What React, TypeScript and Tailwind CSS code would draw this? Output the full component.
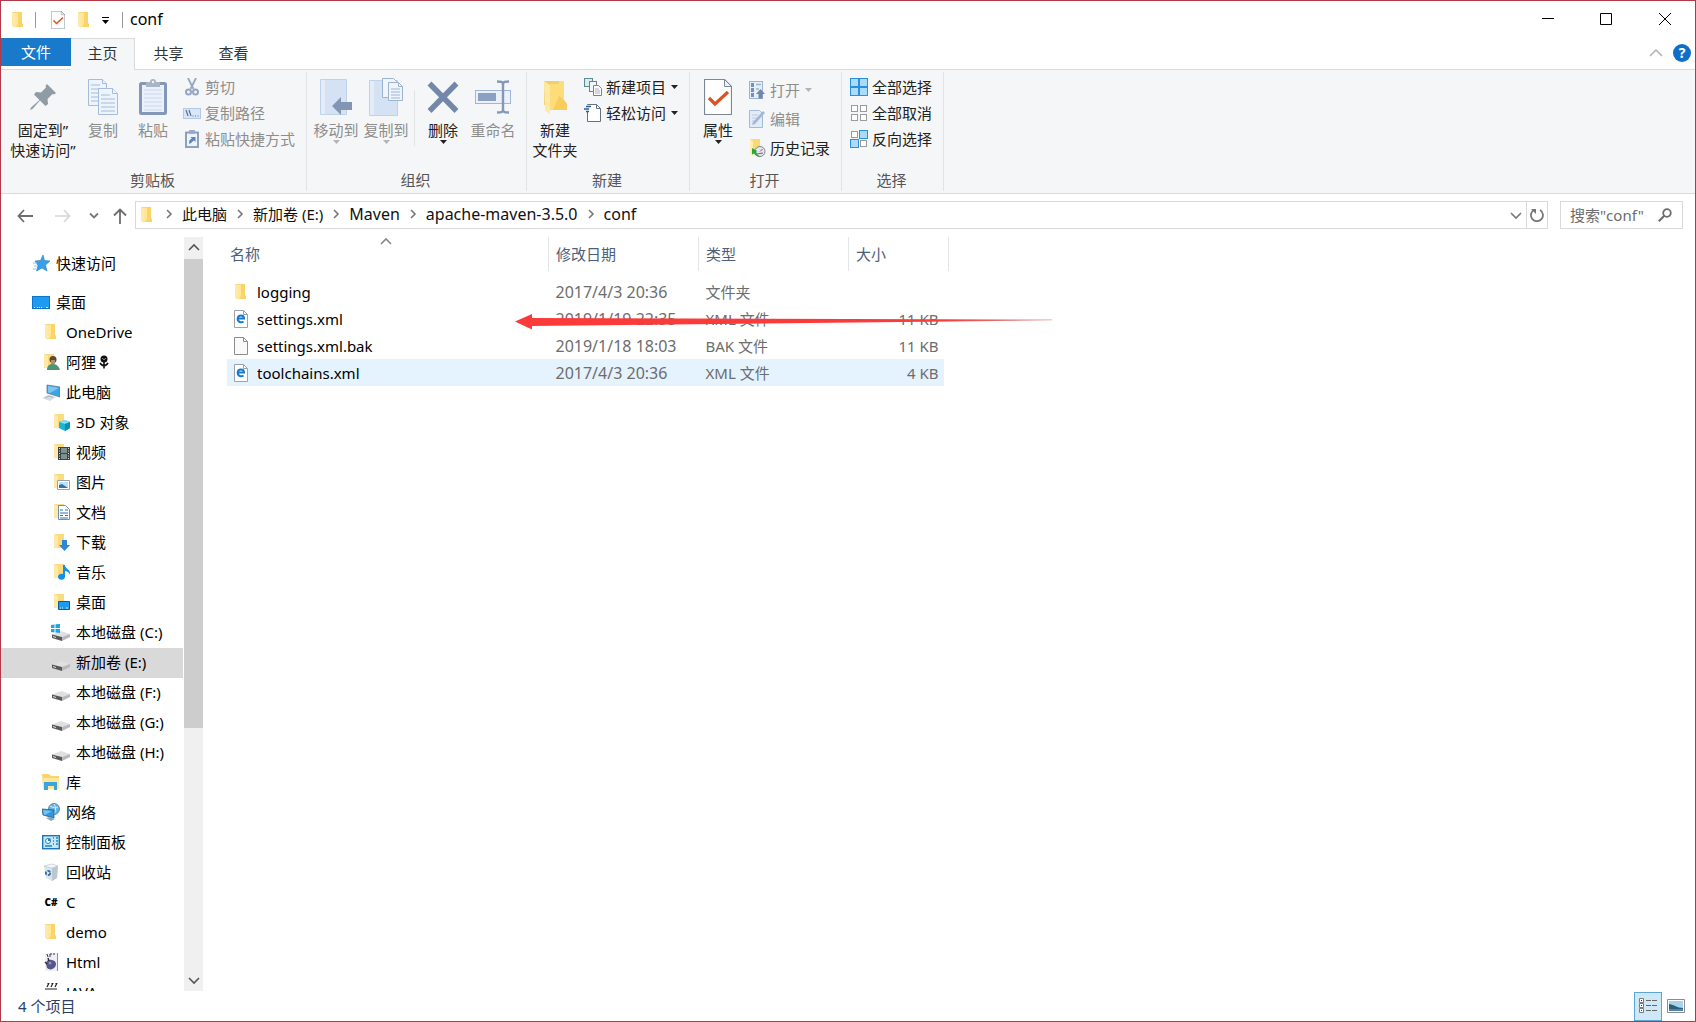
import { ReactNode } from 'react';

interface IconProps {
  className?: string;
}

function Folder({ className = 'h-[18px] w-[18px]' }: IconProps) {
  return (
    <svg viewBox="0 0 18 18" className={className} aria-hidden="true">
      <path d="M3 1h9v14H3z" fill="#f3d681" />
      <path d="M4 2h8l1 12 1 2H5z" fill="#ffe69b" />
      <path d="M9 1h4v11l1 1v3H7l2-3z" fill="#fbd467" />
      <path d="M3 1l3 2v14l-3-2z" fill="#ffe9a9" />
    </svg>
  );
}

// folder with a small picture in its lower right corner
function BadgeFolder({ children }: { children: ReactNode }) {
  return (
    <svg viewBox="0 0 18 18" className="h-[18px] w-[18px]" aria-hidden="true">
      <path d="M2 1h10v14H2z" fill="#f6da87" />
      <path d="M6 2h6v13H6z" fill="#fbdb7c" />
      <path d="M2 1l4 2v13l-4-2z" fill="#ffe9a9" />
      {children}
    </svg>
  );
}

function BigFolder() {
  return (
    <svg viewBox="0 0 28 36" className="h-9 w-7" aria-hidden="true">
      <path d="M3 2h18v24H3z" fill="#f2cf6b" />
      <path d="M9 5h9v-3h5v19l3 4v6H8z" fill="#fddc7a" />
      <path d="M18 17l5 4 3 4v6H12z" fill="#f9cd5c" />
      <path d="M3 2l6 4v28l-1 1-4-4z" fill="#ffe9a6" />
    </svg>
  );
}

function CheckPage({ className }: IconProps) {
  return (
    <svg viewBox="0 0 28 36" className={className} aria-hidden="true">
      <path d="M.5.5h20l7 7v28H.5z" fill="#fff" stroke="#7d8896" strokeWidth="1.200" />
      <path d="M20.500.5v7h7z" fill="#eef1f5" stroke="#7d8896" />
      <path d="M5 19l6 6L24 13" fill="none" stroke="#db5323" strokeWidth="3.200" />
    </svg>
  );
}

function Caret({ className = 'text-[#222]' }: IconProps) {
  return (
    <svg viewBox="0 0 7 4" className={`h-1 w-[7px] ${className}`} aria-hidden="true">
      <path d="M0 0h7L3.500 4z" fill="currentColor" />
    </svg>
  );
}

function Chevron({ dir, className = '' }: { dir: 'up' | 'down' | 'right'; className?: string }) {
  const paths = {
    up: 'M1 8l5-5 5 5',
    down: 'M1 4l5 5 5-5',
    right: 'M4 2l4 4-4 4',
  };
  return (
    <svg viewBox="0 0 12 12" className={`h-3 w-3 shrink-0 ${className}`} aria-hidden="true">
      <path d={paths[dir]} fill="none" stroke="currentColor" strokeWidth="1.600" />
    </svg>
  );
}

function Pin() {
  return (
    <svg viewBox="0 0 26 26" className="h-[26px] w-[26px]" aria-hidden="true">
      <path d="M17 0l9 9-2 1.500-1.500-.5-5 5 .5 5-2.500 2-5.500-5.500L2.500 25 0 26l1-2.500L9.500 16 4 10.500 6 8l5 .5 5-5-.5-1.500z" fill="#8f9ba5" />
    </svg>
  );
}

function CopyPages() {
  return (
    <svg viewBox="0 0 30 36" className="h-9 w-[30px]" fill="#eef4fc" stroke="#a5bcdc" aria-hidden="true">
      <path d="M.5.5h14l4 4v22H.5z" />
      <path d="M14.500.5v4h4M3 6h9M3 10h12M3 14h12M3 18h12M3 22h12" />
      <path d="M10.500 9.500h14l5 5v21h-19z" />
      <path d="M24.500 9.500v5h5M13 16h9M13 20h14M13 24h14M13 28h14M13 32h14" />
    </svg>
  );
}

function Clipboard() {
  return (
    <svg viewBox="0 0 28 36" className="h-9 w-7" aria-hidden="true">
      <rect x="1.500" y="4.500" width="25" height="30" rx="1" fill="#eaf1fb" stroke="#8398b8" strokeWidth="3" />
      <path d="M5 11h18M5 15h18M5 19h18M5 23h18M5 27h18M5 31h18" stroke="#c9d8ee" />
      <path d="M7 3h4a3 3 0 0 1 6 0h4v5H7z" fill="#a9b4c4" />
      <circle cx="14" cy="3" r="1.200" fill="#f5f6f7" />
    </svg>
  );
}

function Scissors() {
  return (
    <svg viewBox="0 0 18 18" className="h-[18px] w-[18px]" fill="none" stroke="#93a7c2" aria-hidden="true">
      <path d="M5 0l5.500 11M13 0L7.500 11" strokeWidth="1.800" />
      <circle cx="5.500" cy="14" r="2.500" strokeWidth="2" />
      <circle cx="12.500" cy="14" r="2.500" strokeWidth="2" />
    </svg>
  );
}

function PathIcon() {
  return (
    <svg viewBox="0 0 18 18" className="h-[18px] w-[18px]" aria-hidden="true">
      <rect x=".5" y="4.500" width="17" height="10" fill="#d9e6f7" stroke="#b3c9e6" />
      <path d="M3 6l2 6M6 6l2 6" stroke="#5b7397" strokeWidth="1.200" />
      <path d="M9.500 12h1M12 12h1M14.500 12h1" stroke="#5b7397" strokeWidth="1.200" />
    </svg>
  );
}

function ShortcutIcon() {
  return (
    <svg viewBox="0 0 18 18" className="h-[18px] w-[18px]" aria-hidden="true">
      <rect x="3" y="2.500" width="12" height="14.500" fill="#edf3fc" stroke="#8398b8" strokeWidth="1.800" />
      <path d="M6 0h6v4H6z" fill="#9fabbd" />
      <path d="M6.500 14c-1-3 .5-5 2.500-5.500L7.500 7h5v5L11 10.500c-1.500.5-2 2-4.500 3.500z" fill="#5f83bb" />
    </svg>
  );
}

function MoveTo() {
  return (
    <svg viewBox="0 0 34 36" className="h-9 w-[34px]" aria-hidden="true">
      <path d="M1.500.5h26v35h-26z" fill="#d5e2f4" stroke="#c0d1ea" />
      <path d="M2 1h4v34H2z" fill="#e3ecf8" />
      <path d="M13 27l9-9v5h11v8H22v5z" fill="#8296b4" />
    </svg>
  );
}

function CopyTo() {
  return (
    <svg viewBox="0 0 34 38" className="h-[38px] w-[34px]" aria-hidden="true">
      <path d="M.5 2.500h28v35H.5z" fill="#d5e2f4" stroke="#c0d1ea" />
      <path d="M1 3h4v34H1z" fill="#e3ecf8" />
      <g fill="#f0f5fc" stroke="#9db3d2">
        <path d="M13.500.5h11l3 3v16h-14z" />
        <path d="M19.500 4.500h10l4 4v14h-14zM29.500 4.500v4h4M22 11h9M22 14h9M22 17h9M22 20h9" />
      </g>
    </svg>
  );
}

function DeleteX() {
  return (
    <svg viewBox="0 0 32 32" className="h-8 w-8" aria-hidden="true">
      <path d="M2.500 2.500L29.500 30M29.500 2.500L2.500 30" stroke="#7388a8" strokeWidth="5.500" />
    </svg>
  );
}

function Rename() {
  return (
    <svg viewBox="0 0 36 34" className="h-[34px] w-9" aria-hidden="true">
      <rect x=".5" y="10.500" width="35" height="13" fill="#eaf1fa" stroke="#9fb6d6" />
      <rect x="3" y="13" width="18" height="8" fill="#8ba1c1" />
      <path d="M22 1.500c4 0 6 0 6 3v25c0 3-2 3-6 3M34 1.500c-4 0-6 0-6 3v25c0 3 2 3 6 3" fill="none" stroke="#8398b8" strokeWidth="2.400" />
    </svg>
  );
}

function NewItem() {
  return (
    <svg viewBox="0 0 18 18" className="h-[18px] w-[18px]" aria-hidden="true">
      <rect x=".5" y=".5" width="8" height="8" fill="#dcebec" stroke="#5b8b92" />
      <rect x="5.500" y="3.500" width="7" height="10" fill="#f4f7fa" stroke="#6f8294" />
      <path d="M9.500 7.500h5l3 3v7h-8z" fill="#fff" stroke="#73849a" />
      <path d="M11 11h4M11 13h5M11 15h5" stroke="#9fb0c6" />
    </svg>
  );
}

function EasyAccess() {
  return (
    <svg viewBox="0 0 18 18" className="h-[18px] w-[18px]" aria-hidden="true">
      <path d="M3.500.5h9l4 4v13h-13z" fill="#fff" stroke="#66717e" />
      <path d="M12.500.5v4h4" fill="none" stroke="#66717e" />
      <path d="M2 1h4v7H2z" fill="#f5f6f7" />
      <path d="M2 2.500h5M0 5h5M2 7.500h3" stroke="#2c5d96" strokeWidth="1.400" />
    </svg>
  );
}

function OpenIcon() {
  return (
    <svg viewBox="0 0 18 18" className="h-[18px] w-[18px]" aria-hidden="true">
      <rect x="1.500" y=".5" width="13" height="17" fill="#e6eefa" stroke="#9fb3d0" />
      <path d="M3 2h3v4H3zM3 7h3v4H3zM3 12h3v4H3z" fill="#7690b6" />
      <path d="M8 3.500h5M8 8h3" stroke="#9fb3d0" strokeWidth="1.500" />
      <path d="M12.500 8l4.500 5h-2.500v4.500h-4V13H8z" fill="#7188ad" />
    </svg>
  );
}

function EditIcon() {
  return (
    <svg viewBox="0 0 18 18" className="h-[18px] w-[18px]" aria-hidden="true">
      <path d="M1.500.5h10l3 3v14h-13z" fill="#e2ebf8" stroke="#a7bad5" />
      <path d="M4 5h6M4 8h6M4 11h5" stroke="#bccde5" />
      <path d="M4 15l1-3L15 1l2 2L7 14z" fill="#a4b7d4" />
    </svg>
  );
}

function HistoryIcon() {
  return (
    <svg viewBox="0 0 18 18" className="h-[18px] w-[18px]" aria-hidden="true">
      <path d="M2 0h10v14H2z" fill="#f9d976" />
      <path d="M2 0l3 2v15l-3-2z" fill="#ffedb3" />
      <circle cx="12" cy="12.500" r="5" fill="#e9e6f1" stroke="#7d8791" />
      <path d="M12 12.500l2.500-2.500M9 15l6-1" stroke="#a24c78" />
      <path d="M4 9v6.500l2-1c1.500 2.500 4 3.500 6.500 3-3-1-4.500-3-4-5.500l1.500.5z" fill="#27a836" />
    </svg>
  );
}

// four small squares; "on" tells which of them are filled
function Squares({ on }: { on: boolean[] }) {
  const spots = [[0, 0], [9, 0], [0, 9], [9, 9]];
  return (
    <svg viewBox="0 0 18 18" className="h-[18px] w-[18px]" aria-hidden="true">
      {spots.map(([x, y], i) =>
        on[i] ? (
          <rect key={i} x={x + 0.5} y={y + 0.5} width="8" height="8" fill="#a9dbfb" stroke="#2b8fdc" />
        ) : (
          <rect key={i} x={x + 1.5} y={y + 1.5} width="6" height="6" fill="#fff" stroke="#9b9b9b" />
        )
      )}
    </svg>
  );
}

function Drive({ system = false }: { system?: boolean }) {
  return (
    <svg viewBox="0 0 18 18" className="h-[18px] w-[18px] overflow-visible" aria-hidden="true">
      <path d="M0 11.500L9 8l9 3-8 3z" fill="#e0e0e0" />
      <path d="M0 11.500l10 2.500v4L0 15z" fill="#585858" />
      <path d="M10 14l8-3v3l-8 4z" fill="#b9b9b9" />
      <path d="M1 13.500l3 1" stroke="#dcdcdc" />
      {system && (
        <path d="M-1 2l3.500-.6V5H-1zM3.500 1.300L8 1v4H3.500zM-1 6h3.500v3.500L-1 9zM3.500 6H8v4l-4.500-.5z" fill="#1ba5e1" />
      )}
    </svg>
  );
}

function Star() {
  return (
    <svg viewBox="0 0 18 18" className="h-[18px] w-[18px]" aria-hidden="true">
      <path d="M11 1l1.500 5.500 5.500.5-4.500 4 1.500 6-5-3L4.500 17 6 11.500 3 7l5.500-.5z" fill="#3a9fe8" stroke="#1e7fca" strokeWidth=".6" />
      <path d="M1 9h4M2 12h3M1 15h3" stroke="#9cc9ec" />
    </svg>
  );
}

function Desktop() {
  return (
    <svg viewBox="0 0 18 18" className="h-[18px] w-[18px]" aria-hidden="true">
      <rect x=".5" y="3.500" width="17" height="12" fill="#1e9af0" stroke="#0c74c9" />
      <path d="M2 14.500h1M5 14.500h1M7 14.500h1M9 14.500h1M14 14.500h2" stroke="#d5ecfd" />
    </svg>
  );
}

function ThisPc() {
  return (
    <svg viewBox="0 0 18 18" className="h-[18px] w-[18px]" aria-hidden="true">
      <path d="M5 2l13 2v10L5 10z" fill="#3ba3e6" stroke="#5d7b92" strokeWidth=".8" />
      <path d="M6 3l11 2-9 5-2-.5z" fill="#7cc6f3" />
      <path d="M0 15l6-3 8 2-6 4z" fill="#d5dce2" />
      <path d="M3 15l4-2 4 1" stroke="#aab4bd" fill="none" />
    </svg>
  );
}

function Library() {
  return (
    <svg viewBox="0 0 18 18" className="h-[18px] w-[18px]" aria-hidden="true">
      <path d="M0 1h7l2 2h8v12H1z" fill="#f6d470" />
      <path d="M1 5h16v11H1z" fill="#ffe795" />
      <path d="M2 9h13v8h-3v-4H6v4H2z" fill="#3ca4dc" />
    </svg>
  );
}

function Network() {
  return (
    <svg viewBox="0 0 18 18" className="h-[18px] w-[18px]" aria-hidden="true">
      <circle cx="12" cy="6" r="5.500" fill="#6ab4e0" stroke="#3679a8" strokeWidth=".8" />
      <path d="M8 3c3 2 6 2 8 1M12 1c2 3 2 7 0 10" stroke="#d7eefb" fill="none" />
      <path d="M0 6l12 1v8L1 12z" fill="#2f97db" stroke="#28618c" strokeWidth=".8" />
      <path d="M1 7l9 1-7 4-1-.5z" fill="#74c3f2" />
      <path d="M4 15l4-1 5 2-4 2z" fill="#8ea5b6" />
    </svg>
  );
}

function ControlPanel() {
  return (
    <svg viewBox="0 0 18 18" className="h-[18px] w-[18px]" aria-hidden="true">
      <rect x=".7" y="2.700" width="16.600" height="13" fill="#c4e8fb" stroke="#1b77b8" strokeWidth="1.400" />
      <circle cx="6" cy="8" r="2.500" fill="#fff" stroke="#2a80ba" />
      <path d="M6 8V5.500h2.500V8z" fill="#2a80ba" />
      <path d="M11 5h1M14 5h2M11 8h1M14 8h2M11 11h1M14 11h2M3 13h7" stroke="#2a80ba" strokeWidth="1.300" />
    </svg>
  );
}

function RecycleBin() {
  return (
    <svg viewBox="0 0 18 18" className="h-[18px] w-[18px]" aria-hidden="true">
      <path d="M2 3l8-2 6 2-1 12-5 3-6-3z" fill="#dce3e9" />
      <path d="M10 5l6-2-1 12-5 3z" fill="#bcc6cf" />
      <path d="M2 3l8-2 6 2-6 2z" fill="#f5f8fa" stroke="#b9c4cc" strokeWidth=".6" />
      <circle cx="6" cy="10" r="2.200" fill="none" stroke="#2b6cb0" strokeWidth="1.700" strokeDasharray="3.200 1.200" />
    </svg>
  );
}

function HtmlIcon() {
  return (
    <svg viewBox="0 0 18 18" className="h-[18px] w-[18px]" aria-hidden="true">
      <path d="M3 0h12v18H3z" fill="#efeff6" />
      <path d="M15.500 0v18" stroke="#8d8db2" />
      <path d="M5 1l1 3M10 1h-2v3M13 1h-2" stroke="#33334d" fill="none" />
      <path d="M4 11c0-4 3-5 6-4 4 1 5 4 3 7-2 3-6 3-8 1z" fill="#55568c" />
      <path d="M3 9l2 2M6 5l1 3" stroke="#2a2a44" strokeWidth="1.400" />
      <circle cx="8" cy="10" r="1.500" fill="#9192bf" />
    </svg>
  );
}

function JavaIcon() {
  return (
    <svg viewBox="0 0 18 18" className="h-[18px] w-[18px]" aria-hidden="true">
      <path d="M5 0h2l-2 4M9 0h2l-2 4M13 0h2l-2 4M3 6h12M5 9h8v6H5z" stroke="#222" strokeWidth="1.200" fill="none" />
    </svg>
  );
}

function XmlFile() {
  return (
    <svg viewBox="0 0 14 18" className="h-[18px] w-[14px]" aria-hidden="true">
      <path d="M.5.5h9l4 4v13H.5z" fill="#fff" stroke="#9aa3ab" />
      <path d="M9.500.5v4h4" fill="none" stroke="#9aa3ab" />
      <path d="M3.500 8.500h6.500c0-4-6-4-6.300 0-.2 4 3.800 4.300 5.800 3" fill="none" stroke="#1479d2" strokeWidth="2" />
    </svg>
  );
}

function BlankFile() {
  return (
    <svg viewBox="0 0 14 18" className="h-[18px] w-[14px]" aria-hidden="true">
      <path d="M.5.5h9l4 4v13H.5z" fill="#fafafa" stroke="#8c8c8c" />
      <path d="M9.500.5v4h4" fill="none" stroke="#8c8c8c" />
    </svg>
  );
}

function Flower() {
  return (
    <svg viewBox="0 0 12 16" className="ml-0.5 h-3.5 w-3" aria-hidden="true">
      <circle cx="6" cy="4.500" r="4" fill="#111" />
      <path d="M4 3.500l2 2 2-2" stroke="#fff" strokeWidth=".7" fill="none" />
      <path d="M6 8v7.500M1.500 9c1 2.500 2.500 3 4.500 3 2 0 3.500-.5 4.500-3" stroke="#111" strokeWidth="1.800" fill="none" />
    </svg>
  );
}

interface TreeItem {
  label: string;
  level: 0 | 1 | 2;
  icon: ReactNode;
  active?: boolean;
  extra?: ReactNode;
}

const tree: TreeItem[] = [
  { label: '桌面', level: 0, icon: <Desktop /> },
  { label: 'OneDrive', level: 1, icon: <Folder /> },
  {
    label: '阿狸',
    level: 1,
    extra: <Flower />,
    icon: (
      <BadgeFolder>
        <circle cx="11" cy="6.500" r="3.500" fill="#5d4a35" />
        <path d="M9 7h4v4H9z" fill="#b98d68" />
        <path d="M5 17c0-5 3-6 6-6 4 0 6 3 7 6z" fill="#4f9274" />
      </BadgeFolder>
    ),
  },
  { label: '此电脑', level: 1, icon: <ThisPc /> },
  {
    label: '3D 对象',
    level: 2,
    icon: (
      <BadgeFolder>
        <path d="M7 9l6-2 5 2v6l-5 3-6-3z" fill="#19b4d8" />
        <path d="M7 9l6-2 5 2-5 2z" fill="#7fe0f2" />
        <path d="M13 11l5-2v6l-5 3z" fill="#0c8fb3" />
      </BadgeFolder>
    ),
  },
  {
    label: '视频',
    level: 2,
    icon: (
      <BadgeFolder>
        <path d="M6 4h12v13H6z" fill="#3b4246" />
        <path d="M9 5h6v5H9zM9 11h6v5H9z" fill="#7d918e" />
        <path d="M7.500 5v12M16.500 5v12" stroke="#ddd" strokeDasharray="1 1.500" />
      </BadgeFolder>
    ),
  },
  {
    label: '图片',
    level: 2,
    icon: (
      <BadgeFolder>
        <path d="M5.500 7.500h12v9h-12z" fill="#fff" stroke="#8fa4b5" />
        <path d="M7 9h9v6H7z" fill="#bfe0f5" />
        <path d="M7 15v-3l3-1 6 4z" fill="#3374a8" />
      </BadgeFolder>
    ),
  },
  {
    label: '文档',
    level: 2,
    icon: (
      <BadgeFolder>
        <path d="M6.500 2.500h7l4 4v10h-11z" fill="#fff" stroke="#6f8fb0" />
        <path d="M8 7h3M13 7h3M8 10h8M8 12.500h3M13 12.500h3M8 15h8" stroke="#2e74b5" />
      </BadgeFolder>
    ),
  },
  {
    label: '下载',
    level: 2,
    icon: (
      <BadgeFolder>
        <path d="M10 7h5v5h3l-5.500 6L7 12h3z" fill="#2f86d6" />
      </BadgeFolder>
    ),
  },
  {
    label: '音乐',
    level: 2,
    icon: (
      <BadgeFolder>
        <path d="M11 2h2c0 4 6 4 5 10-1-3-3-4-5-4v6a3.500 3 0 1 1-2-3z" fill="#1590e6" />
      </BadgeFolder>
    ),
  },
  {
    label: '桌面',
    level: 2,
    icon: (
      <BadgeFolder>
        <path d="M6.500 8.500h11v8h-11z" fill="#1e9af0" stroke="#0a5da5" />
        <path d="M8 15h1M10 15h1M14 15h2" stroke="#d5ecfd" />
      </BadgeFolder>
    ),
  },
  { label: '本地磁盘 (C:)', level: 2, icon: <Drive system /> },
  { label: '新加卷 (E:)', level: 2, icon: <Drive />, active: true },
  { label: '本地磁盘 (F:)', level: 2, icon: <Drive /> },
  { label: '本地磁盘 (G:)', level: 2, icon: <Drive /> },
  { label: '本地磁盘 (H:)', level: 2, icon: <Drive /> },
  { label: '库', level: 1, icon: <Library /> },
  { label: '网络', level: 1, icon: <Network /> },
  { label: '控制面板', level: 1, icon: <ControlPanel /> },
  { label: '回收站', level: 1, icon: <RecycleBin /> },
  { label: 'C', level: 1, icon: <span className="text-[10px] font-black">C#</span> },
  { label: 'demo', level: 1, icon: <Folder /> },
  { label: 'Html', level: 1, icon: <HtmlIcon /> },
  { label: 'JAVA', level: 1, icon: <JavaIcon /> },
];

const files = [
  { name: 'logging', date: '2017/4/3 20:36', type: '文件夹', size: '', icon: <Folder /> },
  { name: 'settings.xml', date: '2019/1/19 22:35', type: 'XML 文件', size: '11 KB', icon: <XmlFile /> },
  { name: 'settings.xml.bak', date: '2019/1/18 18:03', type: 'BAK 文件', size: '11 KB', icon: <BlankFile /> },
  { name: 'toolchains.xml', date: '2017/4/3 20:36', type: 'XML 文件', size: '4 KB', icon: <XmlFile />, hover: true },
];

const crumbs = [
  { label: '此电脑' },
  { label: '新加卷 (E:)' },
  { label: 'Maven', latin: true },
  { label: 'apache-maven-3.5.0', latin: true },
  { label: 'conf', latin: true },
];

const indent = {
  0: 'pl-[31px]',
  1: 'pl-[41px]',
  2: 'pl-[51px]',
};

function Tree({ item }: { item: TreeItem }) {
  return (
    <li>
      <a
        href="#"
        className={`flex h-[30px] items-center gap-1.5 pb-0.5 whitespace-nowrap ${indent[item.level]} ${
          item.active ? 'bg-[#d9d9d9]' : ''
        }`}
      >
        <span className="flex w-[18px] shrink-0 justify-center">{item.icon}</span>
        <span className="flex items-center">
          {item.label}
          {item.extra}
        </span>
      </a>
    </li>
  );
}

interface BigButtonProps {
  icon: ReactNode;
  lines: string[];
  disabled?: boolean;
  caret?: boolean;
  wide?: boolean;
}

function BigButton({ icon, lines, disabled, caret, wide }: BigButtonProps) {
  return (
    <button
      disabled={disabled}
      className={`flex shrink-0 flex-col items-center pt-1.5 leading-5 ${wide ? 'w-[70px]' : 'w-[50px]'} ${
        disabled ? 'text-[#8d8d8d]' : 'text-[#222]'
      }`}
    >
      <span className="mb-1 flex h-[38px] items-center">{icon}</span>
      {lines.map((line) => (
        <span key={line} className="whitespace-nowrap">
          {line}
        </span>
      ))}
      {caret && <Caret className={disabled ? 'text-[#b5b5b5]' : 'text-[#222]'} />}
    </button>
  );
}

interface SmallButtonProps {
  icon: ReactNode;
  label: string;
  disabled?: boolean;
  caret?: boolean;
  tall?: boolean;
}

function SmallButton({ icon, label, disabled, caret, tall }: SmallButtonProps) {
  return (
    <button
      disabled={disabled}
      className={`flex items-center whitespace-nowrap ${tall ? 'h-[29px]' : 'h-[26px]'} ${
        disabled ? 'text-[#8d8d8d]' : 'text-[#222]'
      }`}
    >
      {icon}
      <span className="ml-1">{label}</span>
      {caret && (
        <span className="ml-[5px]">
          <Caret className={disabled ? 'text-[#b5b5b5]' : 'text-[#222]'} />
        </span>
      )}
    </button>
  );
}

function Group({ label, width, children }: { label: string; width: string; children: ReactNode }) {
  return (
    <section className={`flex shrink-0 flex-col justify-between border-r border-[#e2e3e4] ${width}`}>
      <div className="flex items-start">{children}</div>
      <h2 className="pr-0.5 pb-px text-center leading-5 text-[#555]">{label}</h2>
    </section>
  );
}

function TitleBar() {
  return (
    <header className="flex h-[37px] shrink-0 items-center pl-2">
      <Folder />
      <span className="ml-2 h-4 w-px bg-[#999]" />
      <button aria-label="属性" className="ml-[15px]">
        <CheckPage className="h-[18px] w-[14px]" />
      </button>
      <button aria-label="新建文件夹" className="ml-2.5">
        <Folder />
      </button>
      <button aria-label="自定义快速访问工具栏" className="ml-[9px] flex flex-col items-center gap-0.5 pt-0.5">
        <span className="h-px w-[7px] bg-black" />
        <Caret className="text-black" />
      </button>
      <span className="ml-[13px] h-4 w-px bg-[#999]" />
      <h1 className="ml-[7px] pb-0.5 text-base">conf</h1>
      <div className="ml-auto flex items-center pb-0.5">
        <button aria-label="最小化" className="flex w-[58px] justify-center">
          <svg viewBox="0 0 12 12" className="h-3 w-3"><path d="M0 5.500h12" stroke="#000" /></svg>
        </button>
        <button aria-label="最大化" className="flex w-[58px] justify-center">
          <svg viewBox="0 0 12 12" className="h-3 w-3"><path d="M.5.5h11v11H.5z" stroke="#000" fill="none" /></svg>
        </button>
        <button aria-label="关闭" className="flex w-[60px] justify-center">
          <svg viewBox="0 0 12 12" className="h-3 w-3"><path d="M0 0l12 12M12 0L0 12" stroke="#000" /></svg>
        </button>
      </div>
    </header>
  );
}

function Tabs() {
  return (
    <nav className="flex h-8 shrink-0 border-b border-[#dadbdc] text-[#333]">
      <button className="h-7 w-[70px] bg-[#1979ca] text-white">文件</button>
      <button className="-mb-px h-8 w-16 border-t border-r border-[#dadbdc] bg-[#f5f6f7] pb-1">主页</button>
      <button className="h-7 w-[67px] pt-0.5">共享</button>
      <button className="h-7 w-[63px] pt-0.5">查看</button>
      <div className="ml-auto flex h-[30px] items-center pr-1">
        <button aria-label="最小化功能区" className="mr-2.5 text-[#b0b0b0]">
          <svg viewBox="0 0 14 8" className="h-2 w-3.5"><path d="M1 7l6-6 6 6" fill="none" stroke="currentColor" strokeWidth="1.500" /></svg>
        </button>
        <button className="flex h-[18px] w-[18px] items-center justify-center rounded-full bg-[#0f6fc8] text-sm font-bold text-white">
          ?
        </button>
      </div>
    </nav>
  );
}

function Ribbon() {
  return (
    <div className="flex h-[124px] shrink-0 border-b border-[#dadbdc] bg-[#f5f6f7] py-0.5">
      <Group label="剪贴板" width="w-[306px]">
        <div className="w-[7px] shrink-0" />
        <BigButton wide icon={<Pin />} lines={['固定到”', '快速访问”']} />
        <BigButton disabled icon={<CopyPages />} lines={['复制']} />
        <BigButton disabled icon={<Clipboard />} lines={['粘贴']} />
        <div className="ml-[5px] flex flex-col pt-0.5">
          <SmallButton disabled icon={<Scissors />} label="剪切" />
          <SmallButton disabled icon={<PathIcon />} label="复制路径" />
          <SmallButton disabled icon={<ShortcutIcon />} label="粘贴快捷方式" />
        </div>
      </Group>
      <Group label="组织" width="w-[220px]">
        <div className="w-1 shrink-0" />
        <BigButton disabled caret icon={<MoveTo />} lines={['移动到']} />
        <BigButton disabled caret icon={<CopyTo />} lines={['复制到']} />
        <div className="mx-[3px] mt-[18px] h-14 w-px bg-[#e2e3e4]" />
        <BigButton caret icon={<DeleteX />} lines={['删除']} />
        <BigButton disabled icon={<Rename />} lines={['重命名']} />
      </Group>
      <Group label="新建" width="w-[163px]">
        <div className="w-[3px] shrink-0" />
        <BigButton icon={<BigFolder />} lines={['新建', '文件夹']} />
        <div className="ml-1 flex flex-col pt-0.5">
          <SmallButton caret icon={<NewItem />} label="新建项目" />
          <SmallButton caret icon={<EasyAccess />} label="轻松访问" />
        </div>
      </Group>
      <Group label="打开" width="w-[152px]">
        <div className="w-[3px] shrink-0" />
        <BigButton caret icon={<CheckPage className="h-9 w-7" />} lines={['属性']} />
        <div className="ml-[5px] flex flex-col pt-[3px]">
          <SmallButton tall disabled caret icon={<OpenIcon />} label="打开" />
          <SmallButton tall disabled icon={<EditIcon />} label="编辑" />
          <SmallButton tall icon={<HistoryIcon />} label="历史记录" />
        </div>
      </Group>
      <Group label="选择" width="w-[102px]">
        <div className="ml-2 flex flex-col pt-0.5">
          <SmallButton icon={<Squares on={[true, true, true, true]} />} label="全部选择" />
          <SmallButton icon={<Squares on={[false, false, false, false]} />} label="全部取消" />
          <SmallButton icon={<Squares on={[false, true, true, false]} />} label="反向选择" />
        </div>
      </Group>
    </div>
  );
}

function AddressBar() {
  return (
    <div className="flex h-[43px] shrink-0 items-start pt-[7px] pr-3 text-[#777]">
      <div className="flex h-7 w-[134px] shrink-0 items-center pt-0.5 pl-4">
        <button aria-label="后退">
          <svg viewBox="0 0 16 14" className="h-3.5 w-4"><path d="M7 1L1.500 7 7 13M1.500 7H16" fill="none" stroke="#6d6d6d" strokeWidth="1.800" /></svg>
        </button>
        <button aria-label="前进" className="ml-[22px]">
          <svg viewBox="0 0 16 14" className="h-3.5 w-4"><path d="M9 1l5.500 6L9 13M14.500 7H0" fill="none" stroke="#d6d6d6" strokeWidth="1.600" /></svg>
        </button>
        <button aria-label="最近位置" className="ml-[18px]">
          <svg viewBox="0 0 10 8" className="h-2 w-2.5"><path d="M1 1.500l4 4 4-4" fill="none" stroke="#777" strokeWidth="1.800" /></svg>
        </button>
        <button aria-label="上移" className="ml-3.5">
          <svg viewBox="0 0 14 16" className="h-4 w-3.5"><path d="M1 7.500L7 1.500l6 6M7 1.500V16" fill="none" stroke="#6d6d6d" strokeWidth="1.800" /></svg>
        </button>
      </div>
      <div className="flex h-7 min-w-0 flex-1 items-center border border-[#d9d9d9] pl-0.5">
        <Folder />
        {crumbs.map((crumb) => (
          <div key={crumb.label} className="flex items-center pb-0.5">
            <Chevron dir="right" className="mx-[7px]" />
            <a href="#" className={`text-[#111] ${crumb.latin ? 'text-base leading-5' : ''}`}>
              {crumb.label}
            </a>
          </div>
        ))}
        <button aria-label="展开" className="ml-auto flex w-5 justify-center">
          <Chevron dir="down" />
        </button>
        <button aria-label="刷新" className="flex h-full w-[21px] items-center justify-center border-l border-[#d9d9d9]">
          <svg viewBox="0 0 14 14" className="h-3.5 w-3.5">
            <path d="M10 2a6 6 0 1 1-5.500-.3" fill="none" stroke="#777" strokeWidth="1.800" />
            <path d="M1 1h5v5z" fill="#777" />
          </svg>
        </button>
      </div>
      <label className="ml-3 flex h-7 w-[123px] shrink-0 items-center border border-[#d9d9d9] pr-2.5 pl-[9px]">
        <input
          type="search"
          aria-label="搜索"
          placeholder={'搜索"conf"'}
          className="w-full min-w-0 outline-none placeholder:text-[#6d6d6d]"
        />
        <svg viewBox="0 0 14 14" className="h-3.5 w-3.5 shrink-0">
          <circle cx="9" cy="5" r="3.800" fill="none" stroke="#6d6d6d" strokeWidth="1.800" />
          <path d="M6.500 7.500L.8 13.200" stroke="#6d6d6d" strokeWidth="2" />
        </svg>
      </label>
    </div>
  );
}

function Sidebar() {
  return (
    <aside className="flex w-[202px] shrink-0 overflow-hidden">
      <nav className="min-w-0 flex-1 overflow-hidden pt-3">
        <ul className="pr-px text-black">
          <Tree item={{ label: '快速访问', level: 0, icon: <Star /> }} />
          <li className="h-[9px]" aria-hidden="true" />
          {tree.map((item, i) => (
            <Tree key={i} item={item} />
          ))}
        </ul>
      </nav>
      <div className="flex w-[19px] shrink-0 flex-col bg-[#f0f0f0] text-[#555]">
        <button aria-label="向上滚动" className="flex h-[22px] shrink-0 items-center justify-center">
          <Chevron dir="up" />
        </button>
        <div className="min-h-0 flex-1">
          <div className="h-[66%] bg-[#cdcdcd]" />
        </div>
        <button aria-label="向下滚动" className="flex h-[22px] shrink-0 items-center justify-center">
          <Chevron dir="down" />
        </button>
      </div>
    </aside>
  );
}

function FileList() {
  return (
    <main className="relative min-w-0 flex-1 overflow-hidden pl-6">
      <table className="w-[722px] table-fixed border-collapse text-left">
        <colgroup>
          <col />
          <col className="w-[150px]" />
          <col className="w-[150px]" />
          <col className="w-[95px]" />
          <col className="w-[5px]" />
        </colgroup>
        <thead className="text-[#4c607a]">
          <tr className="h-[34px]">
            <th className="relative border-r border-[#e5e5e5] pl-[3px] font-normal">
              名称
              <Chevron dir="up" className="absolute -top-px left-1/2 -ml-2 text-[#888]" />
            </th>
            <th className="border-r border-[#e5e5e5] pl-[7px] font-normal">修改日期</th>
            <th className="border-r border-[#e5e5e5] pl-[7px] font-normal">类型</th>
            <th className="pl-[7px] font-normal">大小</th>
            <th className="border-r border-[#e5e5e5]" />
          </tr>
        </thead>
        <tbody className="text-[#6d6d6d]">
          <tr className="h-[7px]" aria-hidden="true" />
          {files.map((file) => (
            <tr key={file.name} className={`h-[27px] whitespace-nowrap ${file.hover ? '*:bg-[#e5f3ff]' : ''}`}>
              <td className="pl-[5px]">
                <a href="#" className="flex items-center gap-[7px] text-black">
                  <span className="flex w-[18px] justify-center">{file.icon}</span>
                  {file.name}
                </a>
              </td>
              <td className="pl-[7px] text-base leading-5">{file.date}</td>
              <td className="pl-[7px]">{file.type}</td>
              <td className="pr-[5px] text-right">{file.size}</td>
            </tr>
          ))}
        </tbody>
      </table>
      {/* arrow pointing at settings.xml */}
      <svg viewBox="0 0 540 18" className="absolute top-[75px] left-[312px] h-[18px] w-[540px]" aria-hidden="true">
        <defs>
          <linearGradient id="tail" x1="0" x2="1" y1="0" y2="0">
            <stop offset="0.8" stopColor="#fb3a3a" />
            <stop offset="1" stopColor="#c43c3c" stopOpacity="0.5" />
          </linearGradient>
        </defs>
        <path d="M0 9.500L17 2v4l520 1.500v.8L17 14v3.500z" fill="url(#tail)" />
      </svg>
    </main>
  );
}

function StatusBar() {
  return (
    <footer className="flex h-[30px] shrink-0 items-center pl-[17px] text-[#2b3f63]">
      <span>4 个项目</span>
      <div className="ml-auto flex items-center pr-2.5">
        <button aria-label="详细信息" className="flex h-[29px] w-7 items-center justify-center border border-[#5aa7d6] bg-[#cfe8f8]">
          <svg viewBox="0 0 20 16" className="h-4 w-5">
            <path d="M1.500.5h4v4h-4zM1.500 5.500h4v4h-4zM1.500 10.500h4v4h-4z" fill="#fff" stroke="#7a7a7a" />
            <path d="M3 2.500h1M3 7.500h1M3 12.500h1" stroke="#333" />
            <path d="M8 2.500h5M14 2.500h5M8 7.500h5M14 7.500h5M8 12.500h5M14 12.500h5" stroke="#666" />
          </svg>
        </button>
        <button aria-label="大图标" className="ml-[5px]">
          <svg viewBox="0 0 18 14" className="h-3.5 w-[18px]">
            <path d="M.5.5h17v13H.5z" fill="#fff" stroke="#8b8b8b" />
            <path d="M2 2h14v10H2z" fill="#a8d3ee" />
            <path d="M2 5c4 0 8 4 14 4v3H2z" fill="#2d5f77" />
            <path d="M2 10h14v2H2z" fill="#4c86b0" />
          </svg>
        </button>
      </div>
    </footer>
  );
}

export default function App() {
  return (
    <div className="flex h-screen flex-col overflow-hidden border border-[#b23a48] bg-white font-['Noto_Sans','Noto_Sans_CJK_SC',sans-serif] text-[15px] leading-5">
      <TitleBar />
      <Tabs />
      <Ribbon />
      <AddressBar />
      <div className="flex min-h-0 flex-1">
        <Sidebar />
        <FileList />
      </div>
      <StatusBar />
    </div>
  );
}
